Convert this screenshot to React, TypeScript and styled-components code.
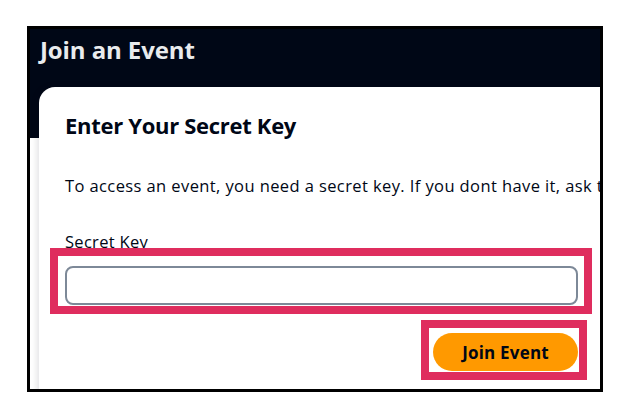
import React from 'react';
import styled, { createGlobalStyle } from 'styled-components';

const GlobalStyle = createGlobalStyle`
  html, body {
    margin: 0;
    background: #ffffff;
  }
  body {
    font-family: 'Open Sans', 'Noto Sans', sans-serif;
    color: #000716;
  }
`;

const Page = styled('div')`
  padding: 26px 0 0 27px;
`;

const Frame = styled('section')`
  width: 576px;
  height: 366px;
  box-sizing: border-box;
  border: 3px solid #000000;
  overflow: hidden;
  background: linear-gradient(#000716 0 109px, #ffffff 109px);
`;

const TopBar = styled('header')`
  height: 58px;
  padding: 6px 0 0 10px;
  box-sizing: border-box;

  h1 {
    margin: 0;
    font-size: 24px;
    line-height: 30px;
    font-weight: 700;
    color: #e9ebed;
    letter-spacing: -0.1px;
  }
`;

const Card = styled('div')`
  margin-left: 9px;
  width: 600px;
  height: 330px;
  background: #ffffff;
  border-radius: 16px 0 0 16px;
  box-shadow: -2px 0 6px rgba(0, 7, 22, 0.12);
  padding: 24px 0 0 26px;
  box-sizing: border-box;

  h2 {
    margin: 0;
    font-size: 22px;
    line-height: 28px;
    font-weight: 700;
    letter-spacing: -0.3px;
  }

  p {
    margin: 36px 0 0;
    font-size: 16.5px;
    line-height: 22px;
    letter-spacing: 0.4px;
    white-space: nowrap;
  }
`;

const Field = styled('div')`
  margin-top: 34px;
  width: 513px;

  label {
    display: block;
    font-size: 16.5px;
    line-height: 22px;
    letter-spacing: 0.3px;
  }
`;

const Marked = styled('div')`
  position: relative;
`;

const Highlight = styled('span')<{ $t: number; $r: number; $b: number; $l: number }>`
  position: absolute;
  top: ${(p) => -p.$t}px;
  right: ${(p) => -p.$r}px;
  bottom: ${(p) => -p.$b}px;
  left: ${(p) => -p.$l}px;
  border: 8px solid #df2d5e;
  pointer-events: none;
`;

const KeyInput = styled('input')`
  display: block;
  width: 100%;
  height: 39px;
  box-sizing: border-box;
  border: 2px solid #7d8998;
  border-radius: 8px;
  background: #ffffff;
  margin-top: 13px;
`;

const Actions = styled('div')`
  display: flex;
  justify-content: flex-end;
  margin-top: 28px;
`;

const PrimaryButton = styled('button')`
  width: 145px;
  height: 38px;
  border: none;
  border-radius: 20px;
  background: #ff9900;
  color: #000716;
  font-family: 'Open Sans', 'Noto Sans', sans-serif;
  font-size: 17px;
  font-weight: 700;
  letter-spacing: 0.2px;
`;

function App() {
  return (
    <Page>
      <GlobalStyle />
      <Frame>
        <TopBar>
          <h1>Join an Event</h1>
        </TopBar>
        <Card>
          <h2>Enter Your Secret Key</h2>
          <p>
            To access an event, you need a secret key. If you dont have it, ask
            the event organizer.
          </p>
          <Field>
            <label htmlFor="secret-key">Secret Key</label>
            <Marked>
              <KeyInput id="secret-key" type="text" />
              <Highlight $t={18} $r={14} $b={9} $l={15} />
            </Marked>
            <Actions>
              <Marked>
                <PrimaryButton type="button">Join Event</PrimaryButton>
                <Highlight $t={13} $r={9} $b={9} $l={12} />
              </Marked>
            </Actions>
          </Field>
        </Card>
      </Frame>
    </Page>
  );
}

export default App;
